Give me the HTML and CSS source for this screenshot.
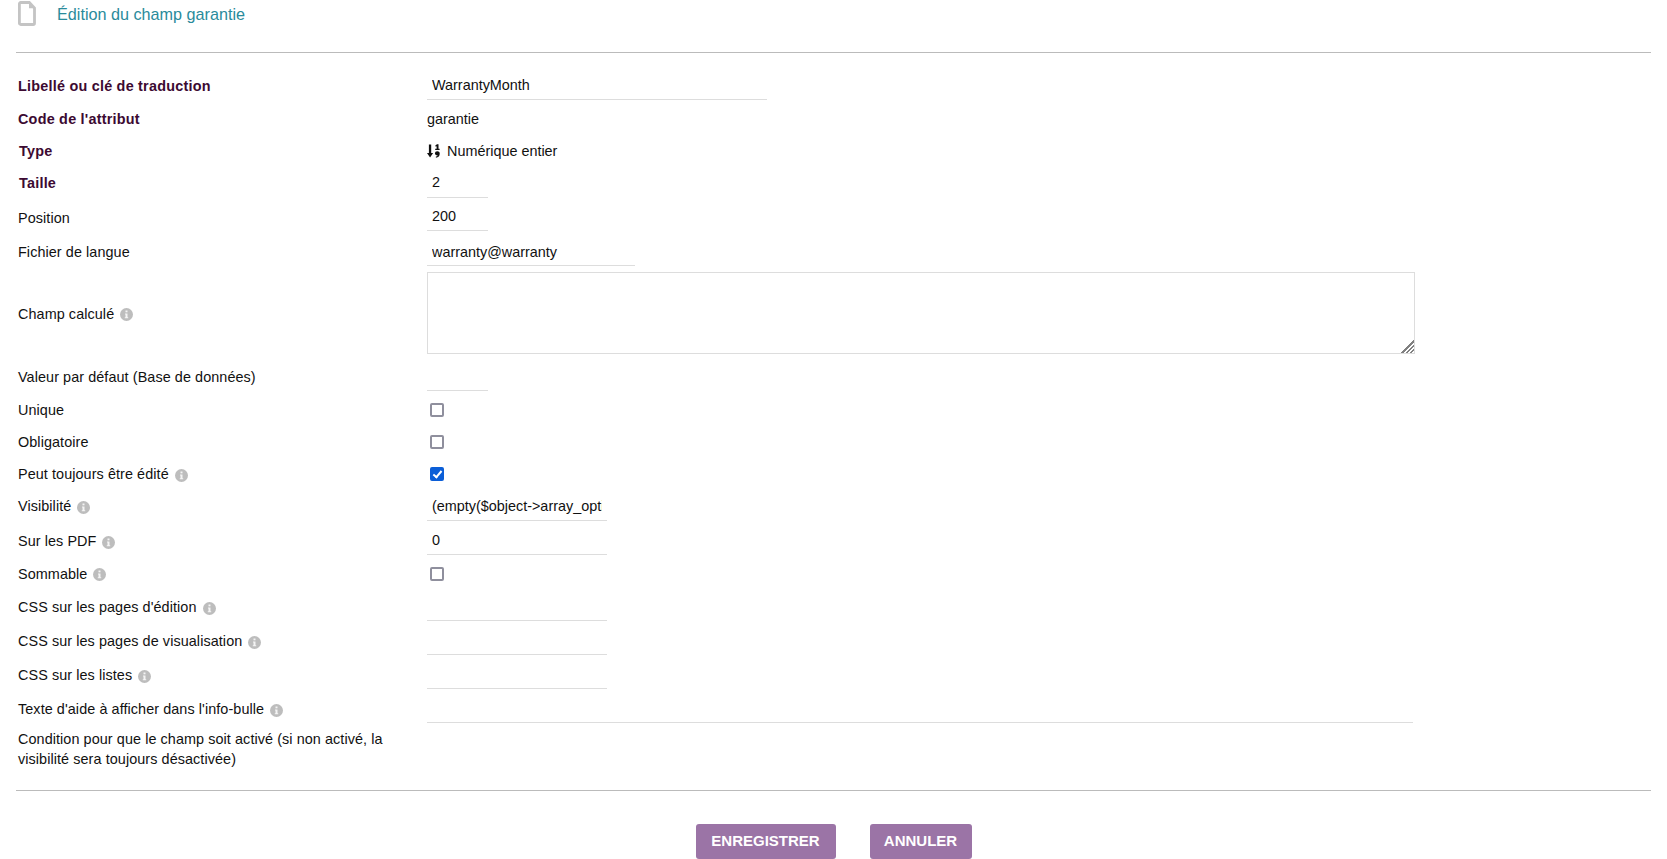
FILE: index.html
```html
<!DOCTYPE html>
<html lang="fr">
<head>
<meta charset="utf-8">
<title>Édition du champ garantie</title>
<link rel="stylesheet" href="styles.css">
</head>
<body>
<svg class="defs" width="0" height="0" aria-hidden="true">
  <symbol id="info" viewBox="0 0 13 13">
    <circle cx="6.500" cy="6.500" r="6.500" fill="#bdbdbd"/>
    <rect x="5.500" y="2.500" width="2" height="1.800" fill="#f4f4f4"/>
    <path d="M5 5.400h2.500v3.800h.7v1H4.800v-1h.7V6.400H5z" fill="#f4f4f4"/>
  </symbol>
</svg>
<header class="title-bar">
  <svg class="file-icon" viewBox="0 0 18 25" aria-hidden="true">
    <path d="M2.700 1.500h8.600l5.200 5.500v15.200a1.300 1.300 0 0 1-1.300 1.300H2.700a1.300 1.300 0 0 1-1.300-1.300V2.800a1.300 1.300 0 0 1 1.300-1.300z" fill="#fff" stroke="#c4c4c4" stroke-width="2.800"/>
    <path d="M11 1.500v5.800h5.800z" fill="#c4c4c4"/>
  </svg>
  <h1 class="title">Édition du champ garantie</h1>
</header>
<hr class="rule rule-top">
<form class="form">
  <div class="row h33"><label class="lab req">Libellé ou clé de traduction</label><input class="inp w-340" type="text" value="WarrantyMonth"></div>
  <div class="row h32 row-down"><label class="lab req">Code de l'attribut</label><span class="val">garantie</span></div>
  <div class="row h33"><label class="lab req type-lab">Type</label><span class="val">
    <svg class="sort-icon" viewBox="0 0 14 14" aria-hidden="true">
      <path d="M1.900 .5h2.300v8.500h1.900L3.050 13.500 0 9h1.900z" fill="#111"/>
      <path d="M8.300 1.500 10 .3h1.500v4.400h1.100v1.300H8.200V4.700h1.400V2.200l-.9.500z" fill="#111"/>
      <path d="M10.300 7.200a2.400 2.400 0 0 1 2.400 2.600c0 2.200-1.200 3.700-3.800 3.900v-1.300c.9-.1 1.500-.4 1.900-1a2.300 2.300 0 0 1-2.900-2.100 2.300 2.300 0 0 1 2.400-2.100z" fill="#111"/>
    </svg>Numérique entier</span></div>
  <div class="row h32"><label class="lab req type-lab">Taille</label><input class="inp w-61 text-up" type="text" value="2"></div>
  <div class="row h35"><label class="lab lab-down">Position</label><input class="inp w-61" type="text" value="200"></div>
  <div class="row h35"><label class="lab">Fichier de langue</label><input class="inp w-208 text-down" type="text" value="warranty@warranty"></div>
  <div class="row h89"><label class="lab">Champ calculé <svg class="info"><use href="#info"/></svg></label><textarea class="area"></textarea></div>
  <div class="row h36"><label class="lab lab-down">Valeur par défaut (Base de données)</label><input class="inp w-61" type="text"></div>
  <div class="row h31"><label class="lab">Unique</label><input class="chk" type="checkbox"></div>
  <div class="row h32 row-down"><label class="lab">Obligatoire</label><input class="chk" type="checkbox"></div>
  <div class="row h32 row-down"><label class="lab">Peut toujours être édité <svg class="info"><use href="#info"/></svg></label><input class="chk" type="checkbox" checked></div>
  <div class="row h34"><label class="lab">Visibilité <svg class="info"><use href="#info"/></svg></label><input class="inp w-180 clip" type="text" value="(empty($object->array_options['options_warranty']))"></div>
  <div class="row h34"><label class="lab lab-down">Sur les PDF <svg class="info"><use href="#info"/></svg></label><input class="inp w-180" type="text" value="0"></div>
  <div class="row h33"><label class="lab">Sommable <svg class="info"><use href="#info"/></svg></label><input class="chk" type="checkbox"></div>
  <div class="row h34"><label class="lab">CSS sur les pages d'édition <svg class="info"><use href="#info"/></svg></label><input class="inp w-180 inp-up" type="text"></div>
  <div class="row h34"><label class="lab">CSS sur les pages de visualisation <svg class="info"><use href="#info"/></svg></label><input class="inp w-180 inp-up" type="text"></div>
  <div class="row h34"><label class="lab">CSS sur les listes <svg class="info"><use href="#info"/></svg></label><input class="inp w-180 inp-up" type="text"></div>
  <div class="row h34"><label class="lab">Texte d'aide à afficher dans l'info-bulle <svg class="info"><use href="#info"/></svg></label><input class="inp w-986 inp-up" type="text"></div>
  <div class="row h49"><label class="lab lab-wrap">Condition pour que le champ soit activé (si non activé, la visibilité sera toujours désactivée)</label></div>
</form>
<hr class="rule rule-bottom">
<div class="actions">
  <button class="btn btn-save" type="button">ENREGISTRER</button>
  <button class="btn btn-cancel" type="button">ANNULER</button>
</div>
</body>
</html>
```
FILE: styles.css
```css
html, body {
  margin: 0;
  padding: 0;
  height: 859px;
  overflow: hidden;
  background: #fff;
}
body {
  font-family: "Liberation Sans", Arial, sans-serif;
  font-size: 14.4px;
  color: #111;
  padding: 0 16px;
  box-sizing: border-box;
}
.defs { position: absolute; }
.title-bar {
  display: flex;
  align-items: flex-start;
  height: 52px;
  padding-left: 2px;
  padding-top: 1px;
  box-sizing: border-box;
}
.file-icon { width: 18px; height: 25px; flex: none; }
.title {
  margin: 3px 0 0 21px;
  font-size: 16.2px;
  line-height: 20px;
  font-weight: 400;
  color: #2a8b9b;
}
.rule {
  border: 0;
  height: 1px;
  margin: 0;
  background: #bbb;
}
.rule-top { margin-bottom: 16px; }
.form { padding-left: 2px; }
.row { display: flex; align-items: center; box-sizing: border-box; }
.row-down { padding-top: 2px; }
.h31 { height: 31px; }
.h32 { height: 32px; }
.h33 { height: 33px; }
.h34 { height: 34px; }
.h35 { height: 35px; }
.h36 { height: 36px; }
.h49 { height: 49px; }
.h89 { height: 89px; }
.lab {
  flex: none;
  width: 409px;
  padding-right: 30px;
  box-sizing: border-box;
  display: flex;
  align-items: center;
  gap: 6px;
  line-height: 20px;
  letter-spacing: .08px;
}
.lab-down { padding-top: 2px; }
.lab-wrap { display: block; padding-bottom: 4px; }
.req { font-weight: 700; color: #3c0a32; letter-spacing: .23px; }
.type-lab { padding-left: 1px; }
.val { display: flex; align-items: center; }
.sort-icon { width: 14px; height: 14px; margin-right: 6px; }
.info { width: 13px; height: 13px; flex: none; margin-top: 2px; }
.inp {
  height: 29px;
  box-sizing: border-box;
  border: 0;
  border-bottom: 1px solid #ddd;
  padding: 0 3px 0 5px;
  font: inherit;
  color: #111;
  background: transparent;
  outline: 0;
}
.inp-up { margin-bottom: 2px; }
.text-up { padding-bottom: 2px; }
.text-down { padding-top: 2px; }
.clip { padding-right: 5px; }
.w-61 { width: 61px; }
.w-180 { width: 180px; }
.w-208 { width: 208px; }
.w-340 { width: 340px; }
.w-986 { width: 986px; }
.area {
  width: 988px;
  height: 82px;
  box-sizing: border-box;
  margin: 0 0 2px;
  border: 1px solid #ddd;
  padding: 4px;
  font: inherit;
  outline: 0;
}
.area::-webkit-resizer {
  background:
    linear-gradient(135deg, #fff 50%, transparent 50%),
    repeating-linear-gradient(135deg, #808080 0 1.5px, #fff 1.5px 3px);
}
.chk {
  appearance: none;
  width: 14px;
  height: 14px;
  box-sizing: border-box;
  margin: 0 0 0 3px;
  border: 2px solid #8f8f9d;
  border-radius: 2px;
  background: #fff;
  display: grid;
  place-items: center;
}
.chk:checked {
  background: #0b5ed7;
  border-color: #0b5ed7;
}
.chk:checked::after {
  content: "";
  width: 3px;
  height: 7px;
  margin-top: -2px;
  border: solid #fff;
  border-width: 0 2px 2px 0;
  transform: rotate(40deg);
}
.rule-bottom { margin-top: 15px; }
.actions {
  display: flex;
  justify-content: center;
  gap: 34px;
  margin-top: 33px;
}
.btn {
  height: 35px;
  border: 0;
  border-radius: 3px;
  background: #9b74a6;
  color: #fff;
  font: 700 15px "Liberation Sans", Arial, sans-serif;
  padding: 0 0 3px;
}
.btn-save { width: 140px; }
.btn-cancel { width: 102px; }
```
